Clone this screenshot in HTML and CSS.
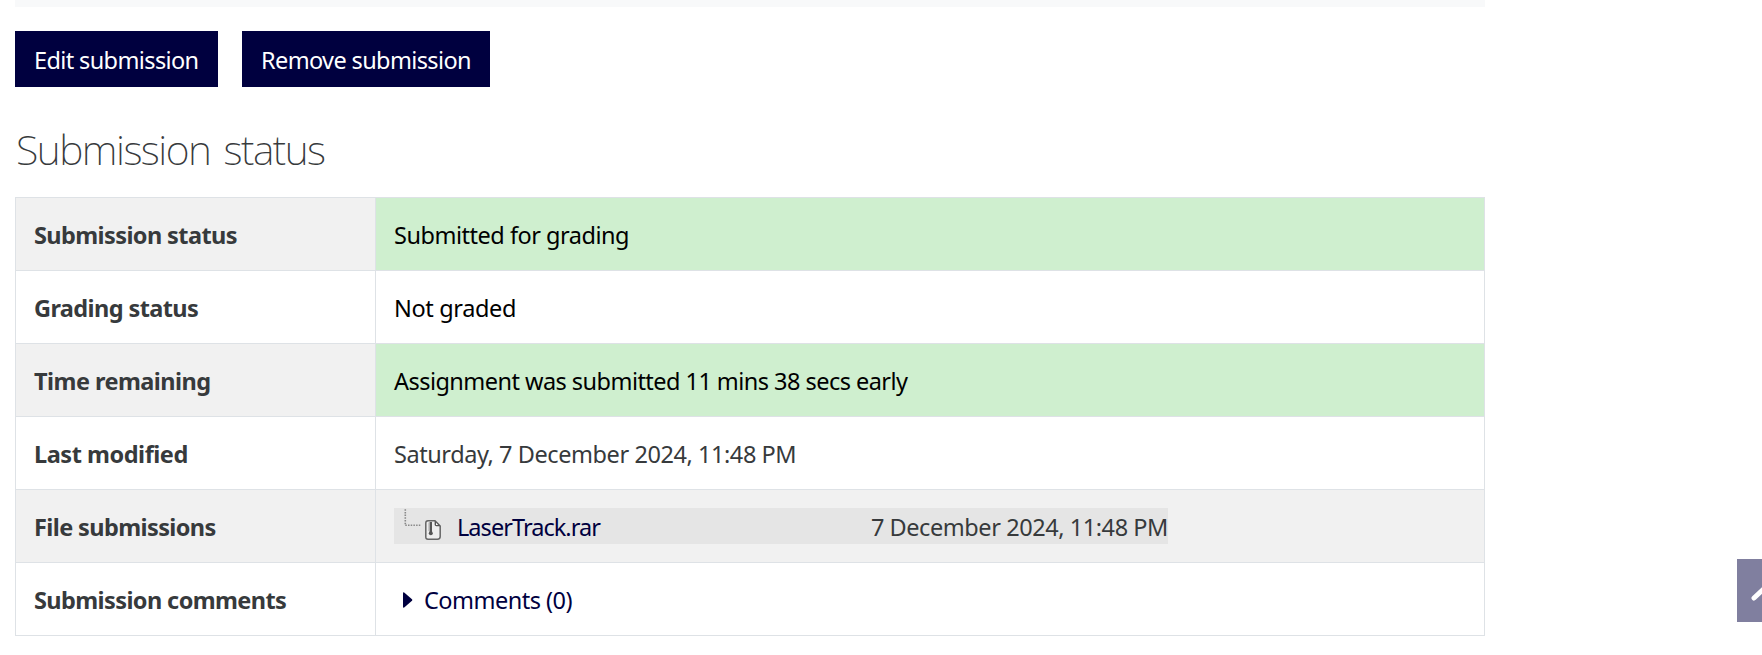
FILE: index.html
```html
<!DOCTYPE html>
<html lang="en">
<head>
<meta charset="utf-8">
<title>Submission status</title>
<link rel="stylesheet" href="styles.css">
</head>
<body>
<main class="content">
  <div class="panel-end"></div>
  <div class="actions">
    <button class="btn btn-edit">Edit submission</button>
    <button class="btn btn-remove">Remove submission</button>
  </div>
  <h2 class="heading">Submission status</h2>
  <table class="status">
    <tr><th>Submission status</th><td class="good submitted">Submitted for grading</td></tr>
    <tr><th>Grading status</th><td class="dark graded">Not graded</td></tr>
    <tr><th class="time-label">Time remaining</th><td class="good early">Assignment was submitted 11 mins 38 secs early</td></tr>
    <tr><th class="modified-label">Last modified</th><td>Saturday, 7 December 2024, 11:48 PM</td></tr>
    <tr><th>File submissions</th><td class="file-cell">
      <div class="file">
        <svg class="branch" width="27" height="36" viewBox="0 0 27 36" fill="none" stroke="#888" stroke-width="1.6" stroke-dasharray="1.5 1.2"><path d="M11.3 1.2V17.5"/><path d="M11.3 17.3H27"/></svg>
        <svg class="archive" width="18" height="22" viewBox="0 0 18 22"><path d="M4 1.8H11L16.2 7V17.5Q16.2 20.2 13.5 20.2H4Q1.8 20.2 1.8 18V4Q1.8 1.8 4 1.8Z" fill="#eee" stroke="#666" stroke-width="1.5"/><path d="M10.6 1.5L16.5 7.2H12.4Q10.6 7.2 10.6 5.4Z" fill="#555"/><path d="M12 3.7V6H14.2Z" fill="#fff"/><path d="M6.8 3V13" stroke="#555" stroke-width="2.4"/><path d="M5 3.5V12" stroke="#aaa" stroke-width="1"/><circle cx="6.8" cy="14.3" r="2" fill="#555"/></svg>
        <a class="file-name">LaserTrack.rar</a>
        <span class="file-date">7 December 2024, 11:48 PM</span>
      </div>
    </td></tr>
    <tr><th>Submission comments</th><td>
      <a class="comments"><svg width="10" height="16" viewBox="0 0 10 16"><path d="M0 1.2Q0 0 1.2 .5L9 7.2Q9.8 8 9 8.8L1.2 15.5Q0 16 0 14.8Z" fill="#00003f"/></svg><span>Comments (0)</span></a>
    </td></tr>
  </table>
</main>
<a class="to-top"><svg width="36" height="20" viewBox="0 0 36 20"><path d="M3 17L18 3L33 17" fill="none" stroke="#fff" stroke-width="5" stroke-linecap="round" stroke-linejoin="round"/></svg></a>
</body>
</html>
```
FILE: styles.css
```css
* { box-sizing: border-box; }

body {
  margin: 0;
  height: 655px;
  overflow: hidden;
  background: #fff;
  color: #373a3c;
  font: 23.5px/36px "Noto Sans", sans-serif;
  letter-spacing: -0.43px;
}

.content { width: 1470px; margin-left: 15px; }
.panel-end { height: 7px; background: #f8f9fa; }
.actions { display: flex; gap: 24px; padding-top: 24px; }

.btn {
  height: 56px;
  padding: 1px 0 0 19px;
  border: 0;
  background: #00003f;
  color: #fff;
  font: inherit;
  text-align: left;
  white-space: nowrap;
}
.btn-edit { width: 203px; letter-spacing: -0.62px; }
.btn-remove { width: 248px; letter-spacing: -0.62px; }

.heading {
  margin: 37px 0 22px 1px;
  font-size: 41px;
  font-weight: 200;
  line-height: 51px;
  letter-spacing: -1.5px;
  word-spacing: 4px;
}

.status {
  width: 1470px;
  table-layout: fixed;
  border-collapse: collapse;
}
.status tr { height: 73px; }
.status tr:nth-child(odd) { background: #f1f1f1; }
.status th,
.status td {
  padding: 1px 18px 0;
  border: 1px solid #dee2e6;
  text-align: left;
  white-space: nowrap;
}
.status th {
  width: 360px;
  font-weight: 700;
  letter-spacing: -0.6px;
}
.status .time-label { letter-spacing: -0.54px; }
.status .modified-label { letter-spacing: -0.46px; }
.status .good { background: #cfefcf; color: #000; }
.status .dark { color: #000; }
.submitted { letter-spacing: -0.48px; }
.graded { letter-spacing: -0.36px; }
.early { letter-spacing: -0.54px; }
.status .file-cell { padding-top: 0; }

.file {
  display: flex;
  width: 774px;
  height: 36px;
  background: #e5e5e5;
}
.branch { flex: none; }
.archive { flex: none; margin: 11px 0 0 3px; }
.file-name { padding: 1px 0 0 15px; color: #00003f; letter-spacing: -0.95px; }
.file-date { margin-left: auto; padding-top: 1px; }

.comments {
  display: flex;
  align-items: center;
  gap: 11px;
  padding-left: 9px;
  color: #00003f;
  letter-spacing: -0.52px;
}

.to-top {
  position: fixed;
  left: 1737px;
  top: 559px;
  width: 63px;
  height: 63px;
  padding: 22px 0 0 14px;
  background: #807f9f;
}
.to-top svg { display: block; }
```
